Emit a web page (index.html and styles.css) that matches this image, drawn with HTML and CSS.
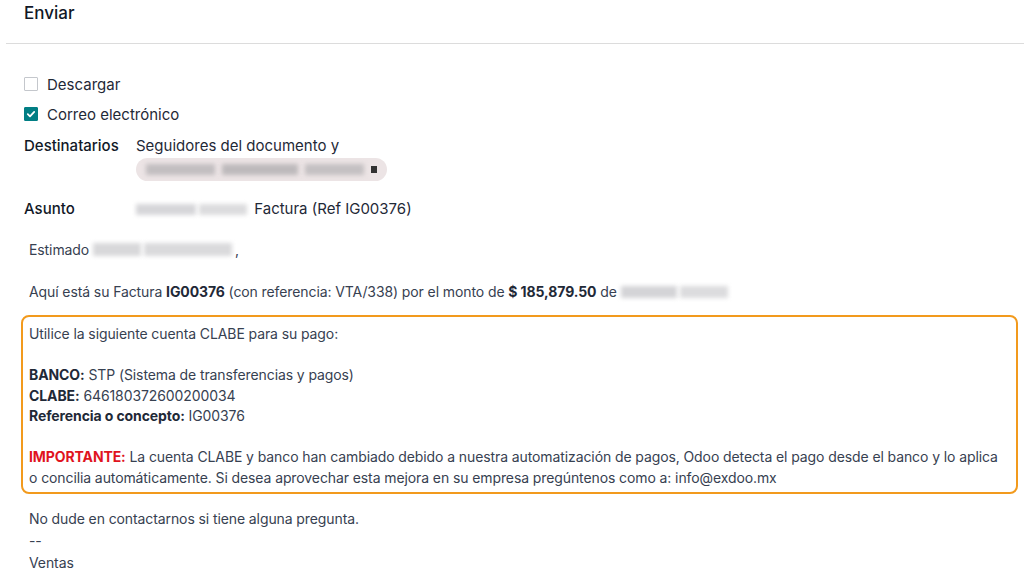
FILE: index.html
```html
<!DOCTYPE html>
<html lang="es">
<head>
  <meta charset="UTF-8">
  <title>Enviar</title>
  <link rel="stylesheet" href="styles.css">
</head>
<body>

<div class="modal-header">
  <h4 class="modal-title">Enviar</h4>
</div>

<div class="modal-body">
  <label class="check-row">
    <span class="check"></span>
    Descargar
  </label>
  <label class="check-row">
    <span class="check checked">
      <svg viewBox="0 0 14 14" width="14" height="14"><path d="M3.8 7.2l2.2 2.1 4.2-4.4" fill="none" stroke="#fff" stroke-width="1.8" stroke-linecap="round" stroke-linejoin="round"/></svg>
    </span>
    Correo electrónico
  </label>

  <div class="field">
    <div class="field-label">Destinatarios</div>
    <div class="field-value">
      <div>Seguidores del documento y</div>
      <span class="tag">
        <span class="blur b1"></span><span class="blur b2"></span><span class="blur b3"></span><span class="tag-x"></span>
      </span>
    </div>
  </div>

  <div class="field subject">
    <div class="field-label">Asunto</div>
    <div class="field-value">
      <span class="blur b4"></span><span class="blur b5"></span> Factura (Ref IG00376)
    </div>
  </div>

  <div class="mail">
    <p>Estimado <span class="blur b6"></span><span class="blur b7"></span>,</p>
    <p>Aquí está su Factura <b>IG00376</b> (con referencia: VTA/338) por el monto de <b>$ 185,879.50</b> de <span class="blur b8"></span><span class="blur b9"></span></p>

    <div class="clabe">
      Utilice la siguiente cuenta CLABE para su pago:<br>
      <br>
      <b>BANCO:</b> STP (Sistema de transferencias y pagos)<br>
      <b>CLABE:</b> 646180372600200034<br>
      <b>Referencia o concepto:</b> IG00376<br>
      <br>
      <b class="warn">IMPORTANTE:</b> La cuenta CLABE y banco han cambiado debido a nuestra automatización de pagos, Odoo detecta el pago desde el banco y lo aplica o concilia automáticamente. Si desea aprovechar esta mejora en su empresa pregúntenos como a: info@exdoo.mx
    </div>

    <p class="sign closing">No dude en contactarnos si tiene alguna pregunta.</p>
    <p class="sign">--</p>
    <p class="sign">Ventas</p>
  </div>
</div>

</body>
</html>
```

FILE: styles.css
```css
body {
  margin: 0;
  background: #fff;
  font-family: Inter, "Noto Sans", sans-serif;
  color: #374151;
  font-size: 14px;
}

.modal-header {
  margin-left: 6px;
  height: 44px;
  border-bottom: 1px solid #dcdcdc;
  box-sizing: border-box;
}
.modal-title {
  margin: 0;
  padding: 2px 0 0 18px;
  font-size: 17px;
  font-weight: 500;
  line-height: 22px;
  color: #111827;
}

.modal-body {
  padding: 25px 24px 0 24px;
}

.check-row {
  display: flex;
  align-items: center;
  gap: 9px;
  height: 30px;
  font-size: 15px;
  color: #1f2937;
}
.check {
  width: 14px;
  height: 14px;
  box-sizing: border-box;
  border: 1px solid #c4c7cc;
  border-radius: 1px;
  display: flex;
}
.check.checked {
  background: #017e84;
  border-color: #017e84;
}
.check svg {
  margin: -1px;
}

.field {
  display: flex;
  margin-top: 6px;
  font-size: 15px;
}
.field-label {
  width: 112px;
  font-weight: 500;
  color: #111827;
  line-height: 22px;
}
.field-value {
  line-height: 22px;
  color: #1f2937;
}
.subject {
  margin-top: 17px;
}

.tag {
  display: inline-flex;
  align-items: center;
  width: 251px;
  height: 23px;
  margin-top: 1px;
  padding: 0 10px;
  box-sizing: border-box;
  border-radius: 12px;
  background: #ece4e5;
  gap: 4px;
}
.tag-x {
  width: 6px;
  height: 7px;
  margin-left: auto;
  background: #333;
  filter: blur(0.6px);
}

.blur {
  display: inline-block;
  height: 11px;
  vertical-align: -1px;
  background: #c9c9cb;
  filter: blur(2px);
  margin-right: 3px;
}
.b1 { width: 70px; background: #c2bec0; }
.b2 { width: 78px; background: #bdb9bb; }
.b3 { width: 60px; background: #c4c0c2; }
.b4 { width: 60px; background: #d6d6d9; }
.b5 { width: 48px; background: #dcdcde; }
.b6 { width: 48px; background: #d8d8da; height: 13px; }
.b7 { width: 88px; background: #dadadc; height: 13px; }
.b8 { width: 56px; background: #d4d4d7; height: 12px; }
.b9 { width: 48px; background: #dcdcde; height: 12px; }

.mail {
  margin-top: 20px;
  font-size: 14px;
  line-height: 20.5px;
  letter-spacing: -0.1px;
  color: #374151;
}
.mail p {
  margin: 0 0 21px 5px;
}
.mail b {
  font-weight: 700;
  color: #1f2937;
}

.clabe {
  margin: -8px -18px 0 -3px;
  padding: 7px 12px 4px 6px;
  border: 2.5px solid #f29a1d;
  border-radius: 8px;
}
.clabe .warn {
  color: #e0141e;
}

.mail p.sign {
  margin: 0 0 1.5px 5px;
}
.mail p.closing {
  margin-top: 15px;
}
```
